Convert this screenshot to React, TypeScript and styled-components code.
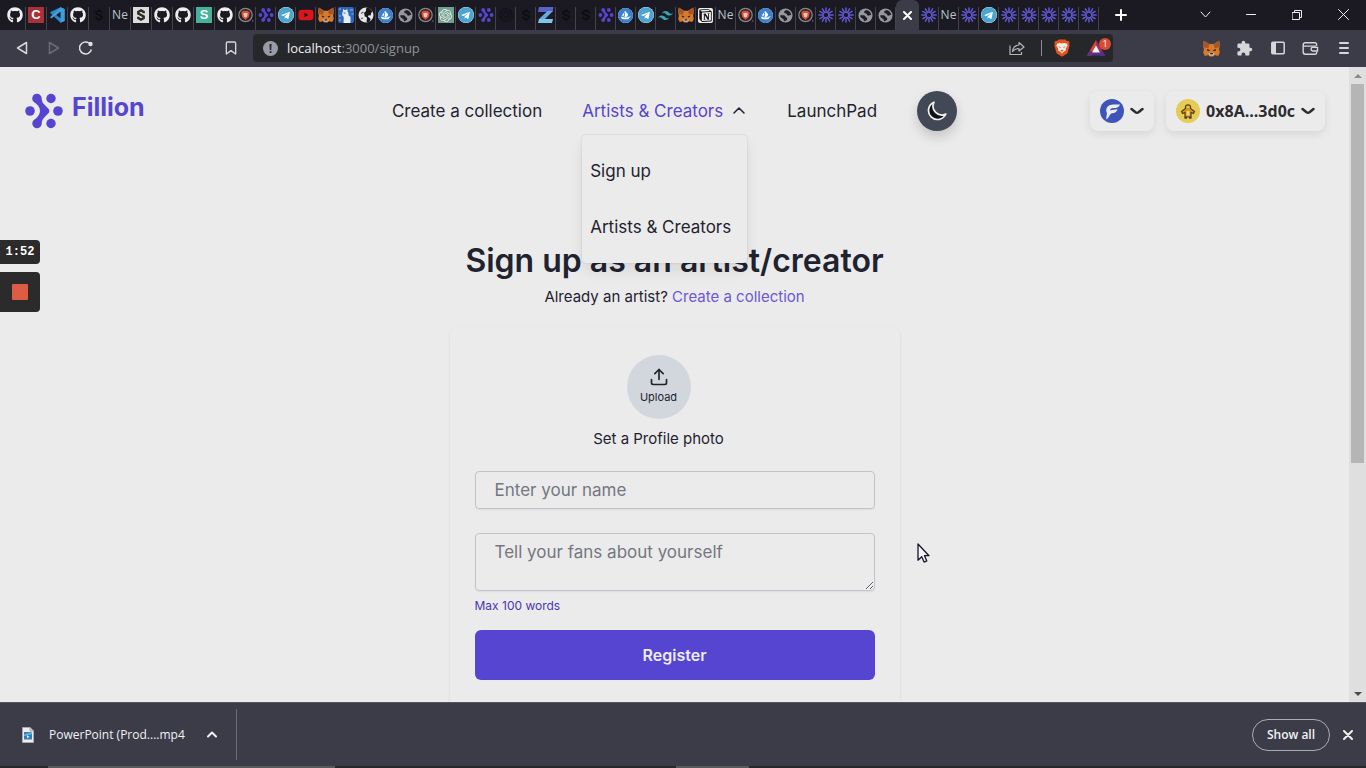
import React from "react";
import styled, { createGlobalStyle } from "styled-components";
import { FaGithub, FaTelegram, FaYoutube } from "react-icons/fa";
import { SiTailwindcss, SiOpensea, SiOpenai, SiNotion } from "react-icons/si";
import { FiUpload, FiBookmark } from "react-icons/fi";
import { MdExtension } from "react-icons/md";

const poppins = `Inter, "Open Sans", sans-serif`;
const chromeFont = `"Open Sans", "Noto Sans", sans-serif`;
const violet = "#5545d1";
const ink = "#1f2330";

const GlobalStyle = createGlobalStyle`
  *, *::before, *::after { box-sizing: border-box; }
  body { margin: 0; overflow: hidden; background: #3b3c48; }
  button, input, textarea { font: inherit; color: inherit; }
  button { padding: 0; border: 0; background: none; cursor: pointer; }
  a { color: inherit; text-decoration: none; }
  svg { display: block; flex: none; }
`;

/* ---------- icons ---------- */

type IconProps = { size?: number };

const FillionMark = ({ size = 40 }: IconProps) => (
  <svg width={size} height={size} viewBox="0 0 40 40" fill={violet}>
    <circle cx="6" cy="20" r="4.8" />
    <circle cx="34" cy="20" r="4.8" />
    <circle cx="27" cy="7.5" r="4.7" />
    <circle cx="27" cy="32.5" r="4.7" />
    <path d="M13 2.8a4.7 4.7 0 0 1 4.7 4.7c0 3 1.2 5 3.8 7.300l2.700 2.700a3.600 3.600 0 0 1 0 5l-2.700 2.700c-2.600 2.300-3.800 4.300-3.800 7.300a4.700 4.700 0 1 1-7.500-3.800c3.300-2.300 5.800-5 5.800-8.700s-2.500-6.400-5.800-8.700A4.700 4.700 0 0 1 13 2.800z" />
  </svg>
);

const Fox = ({ size = 16 }: IconProps) => (
  <svg width={size} height={size} viewBox="0 0 16 16">
    <path d="M.8.600 6 3.800h4L15.200.600 16 5l-.9 3.500.7 3.500-1.500 3-3.300-.8L9.500 15.500h-3L5 14.200 1.700 15 .2 12l.7-3.500L0 5z" fill="#d97a2b" />
    <path d="M.8.600 6 3.800 5 7.500 1 7 0 5zM15.200.600 10 3.800l1 3.700 4-.5 1-2z" fill="#a5562a" />
    <path d="M3.800 8.500 6.300 9.500 6 10.600 4 10zM12.200 8.500 9.700 9.500l.3 1.100 2-.6z" fill="#2b2320" />
    <path d="M5 12.800 6.700 12h2.600l1.700.8-1.200 2H6.200z" fill="#c9b9ab" />
    <path d="M6.800 12.200h2.400l.3 1.200h-3z" fill="#2b2320" />
  </svg>
);

const Globe = ({ size = 15 }: IconProps) => (
  <svg width={size} height={size} viewBox="0 0 16 16">
    <circle cx="8" cy="8" r="7.500" fill="#96989f" />
    <path d="M2.300 7.800h3.500c1.600 0 2.400 1.100 2.400 2.300h1.500v2.200c-.6 1.300-2 1.700-3.200 1.700-.6-.8-.3-1.800-1.200-2.500-1.700-.6-3-1.800-3-3.700z" fill="#1f1e27" />
    <path d="M9.300 2C7.500 2.500 6.300 3.300 6.500 4.500s1.800.8 2.600 1.700.6 2 2 2 1.500-.8 2.900-.6c0-2.500-1.700-4.800-4.700-5.600z" fill="#1f1e27" />
  </svg>
);

const BraveRing = () => (
  <svg width="16" height="16" viewBox="0 0 16 16">
    <circle cx="7.500" cy="8" r="6.700" fill="#2a2426" stroke="#8a878c" strokeWidth="1.200" />
    <path d="M5.200 3.700h4.600l1.900 1.700-.8 4.500-3.400 3-3.400-3-.8-4.500z" fill="#de4b35" />
    <path d="M5.300 6.300 7.500 5.700l2.200.6-.6 3-1.600 1.500-1.600-1.500z" fill="#f3c9bf" />
    <circle cx="14.800" cy="14" r=".7" fill="#77757b" />
  </svg>
);

const BraveLion = () => (
  <svg width="16" height="18" viewBox="0 0 16 18">
    <path d="M4.500.500h7l1.300 1.400 1.700-.2 1.200 2-.6 1.600.6 1-2.200 8L8 17.800 2.500 14.300l-2.200-8 .6-1-.6-1.600 1.200-2 1.700.2z" fill="#e2541d" />
    <path d="M3.300 4.500 6 4l2 .5 2-.5 2.700.5 1 2-2 3.200.4 1.500-2.400 1.500L8 14.500 6.300 12.700l-2.400-1.500.4-1.500-2-3.200z" fill="#f2ebe7" />
    <path d="m4 7.300 2.700.6-.4 1zM12 7.300l-2.700.6.400 1zM6.300 11.500 8 10.800l1.700.7L8 12.700z" fill="#e2541d" />
  </svg>
);

const Burst = () => (
  <svg width="16" height="16" viewBox="0 0 16 16" stroke="#6258d3" strokeWidth="1.500" strokeLinecap="round">
    {Array.from({ length: 12 }, (_, i) => (
      <path key={i} d="M8 .9v4" transform={`rotate(${i * 30} 8 8)`} />
    ))}
    <circle cx="8" cy="8" r="2.800" fill="none" strokeWidth="1" />
  </svg>
);

const sCurve = "M10.700 6.200V5L8 3.300 5.300 5v1.600l5.400 2.800V11L8 12.700 5.300 11V9.800";

const SMark = () => (
  <svg width="16" height="16" viewBox="0 0 16 16">
    <path d={sCurve} fill="none" stroke="#0e0e12" strokeWidth="2" />
  </svg>
);

const SquareS = () => (
  <svg width="16" height="16" viewBox="0 0 16 16">
    <path fill="#dddddb" d="M0 0h16v16H0z" />
    <path d={sCurve} fill="none" stroke="#2b2b2b" strokeWidth="2.400" />
  </svg>
);

const VsCode = () => (
  <svg width="16" height="16" viewBox="0 0 16 16">
    <path d="M11.500.300 15.600 2v12l-4.100 1.700L1 5.800l1.300-1.300z" fill="#2c87c9" />
    <path d="M11.500 15.700 15.600 14V2L11.500.300 1 10.200l1.300 1.300 9.200-7z" fill="#3f9fdb" />
    <path d="M11.500 4.800v6.400L7.300 8z" fill="#1b1a22" />
  </svg>
);

const Alpaca = () => (
  <svg width="16" height="16" viewBox="0 0 16 16">
    <rect width="16" height="16" rx="2" fill="#2d67bd" />
    <path d="M5 4.500V2l1.500 1h1.500L9.500 2v2.500c1 .7 1.200 2 .8 3.500l2.200 2V16H5.500l.3-6C4 9 3.500 6 5 4.500z" fill="#e6ecf3" />
    <path d="M1 2h2M1 9h2M12 3h3M13.500 7h2M1 13h2" stroke="#96b5dc" />
    <path d="M5.500 6h2" stroke="#2d67bd" />
  </svg>
);

const Yin = () => (
  <svg width="16" height="16" viewBox="0 0 16 16">
    <circle cx="8" cy="8" r="7.500" fill="#e5e5e5" />
    <path d="M9 .500C7 3 9 4 7 5s0 2-.5 3.500 2.500 1 2.500 3-1 2.500 0 3.800C13 15 13.500 12 11 10.500s.5-2.500 1.500-2-.5-3 2-3.500C13.500 2.500 11.500 1 9 .500z" fill="#17171a" />
    <path d="M3 6.500 5.500 5M3 11.500l2-.5" stroke="#5f5f62" strokeWidth="1.200" />
  </svg>
);

const ZMark = () => (
  <svg width="16" height="16" viewBox="0 0 16 16">
    <path fill="#5b62c8" d="M1 0h14.500l-1 5H0z" />
    <path fill="#6aa6de" d="M9.500 4H15L7 12H1z" />
    <path fill="#7cc6e6" d="M1 12h14l-1 4H0z" />
  </svg>
);

const ShareIcon = () => (
  <svg width="16" height="16" viewBox="0 0 16 16" fill="none" stroke="#b3b4bb" strokeWidth="1.200">
    <path d="M1 5.500v9h11.500V12" />
    <path d="M10 2.500 15 7l-5 4V8.500C7 8.500 5 9.500 3.500 11.500 4 8 6 5.200 10 5z" strokeLinejoin="round" />
  </svg>
);

const RewardsIcon = () => (
  <svg width="18" height="16" viewBox="0 0 18 16">
    <path d="M9 0 0 15.500h4.500L9 7z" fill="#e0432d" />
    <path d="m9 0 9 15.500h-5L9 7z" fill="#9c2f63" />
    <path d="M0 15.500h18L15 11H3z" fill="#56308c" />
    <path d="m9 5.500 4 7H5z" fill="#f2f0f5" />
  </svg>
);

const SidebarIcon = () => (
  <svg width="14" height="14" viewBox="0 0 14 14">
    <rect x=".8" y="1.300" width="12.400" height="11.400" rx="1" fill="none" stroke="#d7d7da" strokeWidth="1.500" />
    <path d="M1 1.500h4v11H1z" fill="#d7d7da" />
  </svg>
);

const WalletIcon = () => (
  <svg width="17" height="15" viewBox="0 0 18 16" fill="none" stroke="#d7d7da" strokeWidth="1.500">
    <path d="M15.500 5V3.500c0-1-.7-1.700-1.700-1.700H3.500A2.300 2.300 0 0 0 1.200 4v7.800c0 1.400.9 2.300 2.300 2.300h10.300c1 0 1.700-.7 1.700-1.700v-1M1.200 4.200c0 1 .8 1.300 1.800 1.300h12.200" />
    <path d="M16.500 6.800h-5a1.900 1.900 0 0 0 0 3.800h5z" />
  </svg>
);

const Stroke = ({
  d,
  w,
  h,
  width = 2,
  color = "currentColor",
}: {
  d: string;
  w: number;
  h: number;
  width?: number;
  color?: string;
}) => (
  <svg width={w} height={h} viewBox={`0 0 ${w} ${h}`} fill="none" stroke={color} strokeWidth={width} strokeLinecap="round" strokeLinejoin="round">
    <path d={d} />
  </svg>
);

const MoonIcon = () => (
  <svg width="20" height="20" viewBox="0 0 20 20">
    <path d="M7 1.200A9 9 0 1 0 18.800 13 8.800 8.800 0 0 1 7 1.200z" fill="#111217" stroke="#f2f2f2" strokeWidth="1.700" strokeLinejoin="round" />
  </svg>
);

const ChainLogo = () => (
  <svg width="24" height="24" viewBox="0 0 24 24">
    <circle cx="12" cy="12" r="12" fill="#3d55b8" />
    <path d="M6.500 20.500c-.8-2.500.8-4.300.3-6.800C5 9.500 8 5.500 13 5.500h7c-1 2.600-3 3.600-6.500 3.600-2.500 0-3.500.9-3.300 2.400 2-.9 4.500-.6 7.300-1.200-.8 3-2.700 3.700-5.200 4-3 .300-2.600 4-5.800 6.200z" fill="#eceef5" />
  </svg>
);

const PenguinAvatar = () => (
  <svg width="24" height="24" viewBox="0 0 24 24">
    <circle cx="12" cy="12" r="12" fill="#e5cb57" />
    <path d="M9.500 9.500v-2c.5-2.200 4.500-2.200 5 0v2l4 3-1 2-2.500-1v4.500H9v-4.500l-2.500 1-1-2z" fill="#d59a1d" stroke="#55401c" strokeWidth="1.200" />
    <path d="M10.500 12h3v4.500h-3z" fill="#f1d37a" />
    <path d="M10.500 8h3" stroke="#f1d37a" strokeWidth="1.200" />
    <path d="M8.500 18.800H11M13 18.800h2.500" stroke="#55401c" strokeWidth="2" />
  </svg>
);

const FileIcon = () => (
  <svg width="12" height="16" viewBox="0 0 12 16">
    <path d="M.5.500H8L11.500 4v11.500H.500z" fill="#eceeef" stroke="#a7a9ad" />
    <path d="M8 .5V4h3.500" fill="#c9cbce" stroke="#a7a9ad" />
    <rect x="2" y="5" width="8" height="7.500" fill="#2f7fb8" />
    <path d="M2 7.500 10 5v2l-8 2z" fill="#6db3dc" />
    <path d="M5 8.300v3l2.500-1.500z" fill="#fff" />
  </svg>
);

const CursorIcon = () => (
  <svg width="13" height="20" viewBox="0 0 13 20">
    <path d="M1 1v16.200l3.700-3.400 2.400 5.300 2.700-1.200-2.300-5.200H12z" fill="#f4f4f4" stroke="#15152a" strokeWidth="1.300" strokeLinejoin="round" />
  </svg>
);

/* ---------- browser chrome ---------- */

const Shell = styled.div`
  position: relative;
  display: flex;
  flex-direction: column;
  height: 100vh;
  overflow: hidden;
  font-family: ${poppins};
  color: ${ink};
`;

const TabStrip = styled.div`
  display: flex;
  flex: none;
  height: 30px;
  padding-left: 5px;
  background: #1b1a22;
`;

const Tab = styled.button<{ $wide?: boolean }>`
  display: flex;
  align-items: center;
  justify-content: center;
  width: ${(p) => (p.$wide ? 21 : 20)}px;
  height: 23px;
  margin-top: 7px;
  padding-bottom: 7px;
  border-right: 1px solid #44434b;
  overflow: hidden;
`;

const ActiveTab = styled.button`
  display: flex;
  align-items: center;
  justify-content: center;
  width: 23px;
  border-radius: 6px 6px 0 0;
  background: #3b3c48;
  color: #fff;
`;

const Letter = styled.span<{ $bg: string }>`
  display: flex;
  align-items: center;
  justify-content: center;
  width: 16px;
  height: 16px;
  background: ${(p) => p.$bg};
  color: #fff;
  font: 700 13px/16px "Liberation Sans", sans-serif;
`;

const TabText = styled.span`
  color: #b9c4cc;
  font: 12px/16px ${chromeFont};
`;

const NewTab = styled.button`
  display: flex;
  align-items: center;
  justify-content: center;
  width: 44px;
  color: #fff;
`;

const WindowControls = styled.div`
  display: flex;
  margin-left: auto;
`;

const WindowButton = styled.button`
  display: flex;
  align-items: center;
  justify-content: center;
  width: 46px;
  height: 29px;
  color: #eee;
`;

const Toolbar = styled.div`
  display: flex;
  flex: none;
  height: 37px;
  padding: 4px 0 5px;
  background: #3b3c48;
`;

const ToolGroup = styled.div<{ $end?: boolean }>`
  display: flex;
  flex: 0 0 253px;
  justify-content: ${(p) => (p.$end ? "flex-end" : "flex-start")};
  padding: 0 6px;
`;

const ToolButton = styled.button<{ $push?: boolean }>`
  display: flex;
  align-items: center;
  justify-content: center;
  width: ${(p) => (p.$push === undefined ? 33 : 32)}px;
  margin-left: ${(p) => (p.$push ? "auto" : "0")};
  color: #d7d7da;
`;

const AddressBar = styled.div`
  display: flex;
  flex: 1;
  min-width: 0;
  align-items: center;
  gap: 6px;
  padding: 0 3px 0 10px;
  border-radius: 4px;
  background: #26272b;
`;

const InfoBadge = styled.span`
  display: flex;
  align-items: center;
  justify-content: center;
  width: 15px;
  height: 15px;
  margin-right: 3px;
  border-radius: 50%;
  background: #9a9ca5;
  color: #26272b;
  font: 700 12px/15px ${chromeFont};
`;

const Url = styled.span`
  flex: 1;
  color: #8f9199;
  font: 13px/20px ${chromeFont};

  b {
    color: #f0f0f2;
    font-weight: 400;
  }
`;

const BarButton = styled.button`
  position: relative;
  display: flex;
  align-items: center;
  justify-content: center;
  width: 28px;
  height: 28px;
`;

const BarDivider = styled.span`
  width: 1px;
  height: 16px;
  margin-left: 4px;
  background: #8b8c93;
`;

const CountBadge = styled.span`
  position: absolute;
  top: 4px;
  right: -1px;
  width: 12px;
  height: 12px;
  border-radius: 50%;
  background: #d84b36;
  color: #fff;
  font: 9px/12px ${chromeFont};
`;

/* ---------- page ---------- */

const Viewport = styled.div`
  display: flex;
  flex: 1;
  min-height: 0;
  background: #ebebeb;
`;

const Page = styled.div`
  flex: 1;
  min-width: 0;
  overflow: hidden;
`;

const ScrollTrack = styled.div`
  display: flex;
  flex-direction: column;
  align-items: center;
  width: 17px;
  background: #dfdfdf;
`;

const ScrollArrow = styled.button`
  display: flex;
  align-items: center;
  justify-content: center;
  width: 17px;
  height: 17px;
`;

const ScrollBody = styled.div`
  flex: 1;
  width: 13px;
`;

const ScrollThumb = styled.div`
  height: 63%;
  background: #b5b5b5;
`;

const Header = styled.header`
  display: grid;
  grid-template-columns: 1fr auto 1fr;
  align-items: center;
  padding: 24px;
`;

const Brand = styled.a`
  display: flex;
  align-items: center;
  gap: 8px;
  color: ${violet};
  font-size: 25px;
  font-weight: 700;
  line-height: 32px;

  span {
    padding-bottom: 8px;
  }
`;

const Nav = styled.nav`
  display: flex;
  align-items: center;
  gap: 40px;
  font-size: 17px;
  line-height: 24px;
`;

const NavMenu = styled.div`
  position: relative;
`;

const NavToggle = styled.button`
  display: flex;
  align-items: center;
  gap: 8px;
  color: ${violet};

  svg {
    color: ${ink};
  }
`;

const Dropdown = styled.div`
  position: absolute;
  top: 36px;
  left: 0;
  right: 0;
  z-index: 2;
  display: flex;
  flex-direction: column;
  gap: 32px;
  padding: 24px 8px;
  border-radius: 4px;
  background: #ebebeb;
  box-shadow: 0 0 2px rgba(0, 0, 0, 0.16), 0 8px 14px rgba(0, 0, 0, 0.08);
  white-space: nowrap;
`;

const ThemeButton = styled.button`
  display: flex;
  align-items: center;
  justify-content: center;
  width: 40px;
  height: 40px;
  border-radius: 50%;
  background: #424856;
  box-shadow: 0 6px 12px rgba(0, 0, 0, 0.16);
`;

const Wallet = styled.div`
  display: flex;
  justify-content: flex-end;
  gap: 12px;
`;

const WalletButton = styled.button`
  display: flex;
  align-items: center;
  gap: 6px;
  height: 40px;
  padding: 0 10px;
  border-radius: 8px;
  box-shadow: 0 3px 9px rgba(0, 0, 0, 0.09);
  color: #2c2d31;
  font: 700 16px/20px ${chromeFont};
`;

const Main = styled.main`
  display: flex;
  flex-direction: column;
  align-items: center;
  padding-top: 86px;
`;

const Title = styled.h1`
  margin: 0 0 6px;
  font-size: 32px;
  font-weight: 600;
  line-height: 40px;
`;

const Lead = styled.p`
  margin: 0 0 20px;
  font-size: 15px;
  line-height: 20px;

  a {
    color: #6c58d6;
  }
`;

const Card = styled.form`
  display: flex;
  flex-direction: column;
  width: 450px;
  max-width: 100%;
  padding: 28px 25px 48px;
  border-radius: 8px;
  box-shadow: 0 1px 3px rgba(0, 0, 0, 0.09);
`;

const Photo = styled.div`
  display: flex;
  flex-direction: column;
  align-items: center;
  gap: 10px;
  margin: 0 32px 22px 0;
  font-size: 15px;
  line-height: 20px;
`;

const UploadButton = styled.button`
  display: flex;
  flex-direction: column;
  align-items: center;
  justify-content: center;
  gap: 2px;
  width: 64px;
  height: 64px;
  padding-bottom: 2px;
  border-radius: 50%;
  background: #d2d7de;
  font-size: 11px;
  line-height: 16px;
`;

const Field = styled.input`
  height: 38px;
  margin-bottom: 24px;
  padding: 0 19px;
  border: 1px solid #c1c4cd;
  border-radius: 4px;
  background: transparent;
  box-shadow: 0 1px 2px rgba(0, 0, 0, 0.06);
  font-size: 17px;
  line-height: 24px;

  &::placeholder {
    color: #74777f;
  }
`;

const Bio = styled.textarea`
  height: 58px;
  padding: 6px 19px;
  border: 1px solid #c1c4cd;
  border-radius: 4px;
  background: transparent;
  box-shadow: 0 1px 2px rgba(0, 0, 0, 0.06);
  font-size: 17px;
  line-height: 24px;
  resize: vertical;
  overflow: hidden;

  &::placeholder {
    color: #74777f;
  }
`;

const Hint = styled.span`
  margin: 7px 0 16px;
  color: #4a35b5;
  font-size: 12px;
  line-height: 16px;
`;

const Submit = styled.button`
  height: 50px;
  border-radius: 6px;
  background: ${violet};
  color: #ebebf4;
  font-size: 16px;
  font-weight: 600;
  line-height: 24px;
`;

/* ---------- downloads and overlays ---------- */

const Downloads = styled.div`
  display: flex;
  flex: none;
  align-items: center;
  height: 64px;
  padding: 0 6px 0 22px;
  border-top: 1px solid #55565f;
  background: #3b3c48;
  color: #f1f1f3;
  font: 12px/20px ${chromeFont};
`;

const DownloadItem = styled.div`
  display: flex;
  align-items: center;
  gap: 15px;
  height: 51px;
  padding-right: 12px;
  border-right: 1px solid #6b6c75;
`;

const IconButton = styled.button`
  display: flex;
  align-items: center;
  justify-content: center;
  width: 24px;
  height: 24px;
`;

const ShowAll = styled.button`
  width: 78px;
  height: 32px;
  margin: 0 6px 0 auto;
  border: 1px solid #a9abb6;
  border-radius: 16px;
  font-weight: 600;
`;

const Taskbar = styled.div`
  display: flex;
  flex: none;
  height: 2px;
  background: #28282a;
`;

const TaskMark = styled.span<{ $before: number; $width: number }>`
  width: ${(p) => p.$width}%;
  margin-left: ${(p) => p.$before}%;
  background: #5a5a5c;
`;

const Recorder = styled.div`
  position: absolute;
  top: 240px;
  left: 0;
  z-index: 3;
  display: flex;
  flex-direction: column;
  gap: 8px;
  width: 40px;
`;

const RecTime = styled.span`
  height: 24px;
  border-radius: 0 4px 4px 0;
  background: #2b2b2b;
  color: #fff;
  font: 700 12px/24px "Liberation Mono", monospace;
  text-align: center;
`;

const RecStop = styled.button`
  display: flex;
  align-items: center;
  justify-content: center;
  height: 40px;
  border-radius: 0 4px 4px 0;
  background: #2b2b2b;

  span {
    width: 16px;
    height: 16px;
    border-radius: 1px;
    background: #df5c44;
  }
`;

const Pointer = styled.div`
  position: absolute;
  top: 543px;
  left: 917px;
  z-index: 4;
`;

const RoundOnWhite = styled.span`
  display: flex;
  border-radius: 50%;
  background: #fff;
`;

const SquareOnWhite = styled.span`
  display: flex;
  padding: 1px;
  border-radius: 2px;
  background: #eee;
`;

const tabIcons: Record<string, React.ReactNode> = {
  github: <FaGithub size={16} color="#eeeeee" />,
  c: <Letter $bg="#a93236">C</Letter>,
  code: <VsCode />,
  dim: <SMark />,
  ne: <TabText>Ne</TabText>,
  s: <SquareS />,
  green: <Letter $bg="#45b29a">S</Letter>,
  brave: <BraveRing />,
  fillion: <FillionMark size={16} />,
  telegram: (
    <RoundOnWhite>
      <FaTelegram size={16} color="#4aa5d2" />
    </RoundOnWhite>
  ),
  youtube: <FaYoutube size={16} color="#d9161b" />,
  fox: <Fox />,
  alpaca: <Alpaca />,
  yin: <Yin />,
  sea: (
    <RoundOnWhite>
      <SiOpensea size={15} color="#3a80d0" />
    </RoundOnWhite>
  ),
  globe: <Globe />,
  gpt: (
    <Letter $bg="#739f90">
      <SiOpenai size={13} color="#e4ece9" />
    </Letter>
  ),
  dimgpt: <SiOpenai size={14} color="#101014" />,
  z: <ZMark />,
  tailwind: <SiTailwindcss size={15} color="#36a7b5" />,
  notion: (
    <SquareOnWhite>
      <SiNotion size={13} color="#18181b" />
    </SquareOnWhite>
  ),
  burst: <Burst />,
};

const wideTabs = "github c code github dim ne s github github green github".split(" ");
const narrowTabs =
  "brave fillion telegram youtube fox alpaca yin sea globe brave gpt telegram fillion dimgpt dim z dim dim fillion sea telegram tailwind fox notion ne brave sea globe brave burst burst globe globe".split(" ");
const lastTabs = "burst ne burst telegram burst burst burst burst burst".split(" ");

const TabGroup = ({ items, wide }: { items: string[]; wide?: boolean }) => (
  <>
    {items.map((name, i) => (
      <Tab key={i} $wide={wide} aria-label={name}>
        {tabIcons[name]}
      </Tab>
    ))}
  </>
);

const chevronDown = "M1.500 2 5.500 5.200Q7 6.200 8.500 5.200L12.500 2";

export default function App() {
  return (
    <Shell>
      <GlobalStyle />

      <TabStrip>
        <TabGroup items={wideTabs} wide />
        <TabGroup items={narrowTabs} />
        <ActiveTab aria-label="Close tab">
          <Stroke w={9} h={9} width={2} d="m1 1 7 7m0-7L1 8" />
        </ActiveTab>
        <TabGroup items={lastTabs} />
        <NewTab aria-label="New tab">
          <Stroke w={12} h={12} d="M6 1v10M1 6h10" />
        </NewTab>
        <WindowControls>
          <WindowButton aria-label="Search tabs">
            <Stroke w={11} h={7} width={1} d="m1 1 4.500 5L10 1" />
          </WindowButton>
          <WindowButton aria-label="Minimise">
            <Stroke w={10} h={1} width={1} d="M.5.500h9" />
          </WindowButton>
          <WindowButton aria-label="Restore">
            <Stroke w={10} h={10} width={1} d="M.5 2.500h7v7h-7zM2.500 2.500v-2h7v7h-2" />
          </WindowButton>
          <WindowButton aria-label="Close">
            <Stroke w={11} h={11} width={1} d="m.5.500 10 10m0-10-10 10" />
          </WindowButton>
        </WindowControls>
      </TabStrip>

      <Toolbar>
        <ToolGroup>
          <ToolButton $push={false} aria-label="Back">
            <Stroke w={12} h={14} width={1.5} d="M10.500 1.500v11L1.500 7z" />
          </ToolButton>
          <ToolButton $push={false} aria-label="Forward">
            <Stroke w={12} h={14} width={1.5} color="#696b77" d="M1.500 1.500v11l9-5.500z" />
          </ToolButton>
          <ToolButton $push={false} aria-label="Reload">
            <svg width="14" height="14" viewBox="0 0 14 14">
              <path d="M12.400 8.500A6 6 0 1 1 10 2" fill="none" stroke="#e2e2e5" strokeWidth="1.500" />
              <circle cx="11.500" cy="3" r="2.200" fill="#e2e2e5" />
            </svg>
          </ToolButton>
          <ToolButton $push aria-label="Bookmark">
            <FiBookmark size={16} />
          </ToolButton>
        </ToolGroup>
        <AddressBar>
          <InfoBadge>!</InfoBadge>
          <Url>
            <b>localhost</b>:3000/signup
          </Url>
          <BarButton aria-label="Share">
            <ShareIcon />
          </BarButton>
          <BarDivider />
          <BarButton aria-label="Brave Shields">
            <BraveLion />
          </BarButton>
          <BarButton aria-label="Rewards">
            <RewardsIcon />
            <CountBadge>1</CountBadge>
          </BarButton>
        </AddressBar>
        <ToolGroup $end>
          <ToolButton aria-label="MetaMask">
            <Fox size={17} />
          </ToolButton>
          <ToolButton aria-label="Extensions">
            <MdExtension size={17} />
          </ToolButton>
          <ToolButton aria-label="Sidebar">
            <SidebarIcon />
          </ToolButton>
          <ToolButton aria-label="Wallet">
            <WalletIcon />
          </ToolButton>
          <ToolButton aria-label="Menu">
            <Stroke w={10} h={12} width={2} d="M1 1h8M1 6h8M1 11h8" />
          </ToolButton>
        </ToolGroup>
      </Toolbar>

      <Viewport>
        <Page>
          <Header>
            <Brand href="#">
              <FillionMark size={40} />
              <span>Fillion</span>
            </Brand>
            <Nav>
              <a href="#create">Create a collection</a>
              <NavMenu>
                <NavToggle aria-expanded="true">
                  Artists &amp; Creators
                  <Stroke w={16} h={8} width={1.5} d="m3 6 5-5 5 5" />
                </NavToggle>
                <Dropdown>
                  <a href="#signup">Sign up</a>
                  <a href="#artists">Artists &amp; Creators</a>
                </Dropdown>
              </NavMenu>
              <a href="#launchpad">LaunchPad</a>
              <ThemeButton aria-label="Dark mode">
                <MoonIcon />
              </ThemeButton>
            </Nav>
            <Wallet>
              <WalletButton aria-label="Network">
                <ChainLogo />
                <Stroke w={14} h={8} width={2.5} d={chevronDown} />
              </WalletButton>
              <WalletButton>
                <PenguinAvatar />
                0x8A...3d0c
                <Stroke w={14} h={8} width={2.5} d={chevronDown} />
              </WalletButton>
            </Wallet>
          </Header>

          <Main>
            <Title>Sign up as an artist/creator</Title>
            <Lead>
              Already an artist? <a href="#create">Create a collection</a>
            </Lead>
            <Card onSubmit={(e) => e.preventDefault()}>
              <Photo>
                <UploadButton type="button">
                  <FiUpload size={20} />
                  Upload
                </UploadButton>
                <span>Set a Profile photo</span>
              </Photo>
              <Field aria-label="Name" placeholder="Enter your name" />
              <Bio aria-label="About you" placeholder="Tell your fans about yourself" />
              <Hint>Max 100 words</Hint>
              <Submit type="submit">Register</Submit>
            </Card>
          </Main>
        </Page>
        <ScrollTrack>
          <ScrollArrow aria-label="Scroll up">
            <svg width="8" height="4" viewBox="0 0 8 4">
              <path d="M4 0 8 4H0z" fill="#8b8b8b" />
            </svg>
          </ScrollArrow>
          <ScrollBody>
            <ScrollThumb />
          </ScrollBody>
          <ScrollArrow aria-label="Scroll down">
            <svg width="8" height="4" viewBox="0 0 8 4">
              <path d="M0 0h8L4 4z" fill="#4b4b4b" />
            </svg>
          </ScrollArrow>
        </ScrollTrack>
      </Viewport>

      <Downloads>
        <DownloadItem>
          <FileIcon />
          PowerPoint (Prod....mp4
          <IconButton aria-label="Download options">
            <Stroke w={10} h={7} width={2} d="m1 5.500 4-4 4 4" />
          </IconButton>
        </DownloadItem>
        <ShowAll>Show all</ShowAll>
        <IconButton aria-label="Close downloads">
          <Stroke w={10} h={10} width={2} d="m1 1 8 8m0-8L1 9" />
        </IconButton>
      </Downloads>
      <Taskbar>
        <TaskMark $before={3.5} $width={21} />
        <TaskMark $before={25} $width={5.3} />
      </Taskbar>

      <Recorder>
        <RecTime>1:52</RecTime>
        <RecStop aria-label="Stop recording">
          <span />
        </RecStop>
      </Recorder>
      <Pointer>
        <CursorIcon />
      </Pointer>
    </Shell>
  );
}
